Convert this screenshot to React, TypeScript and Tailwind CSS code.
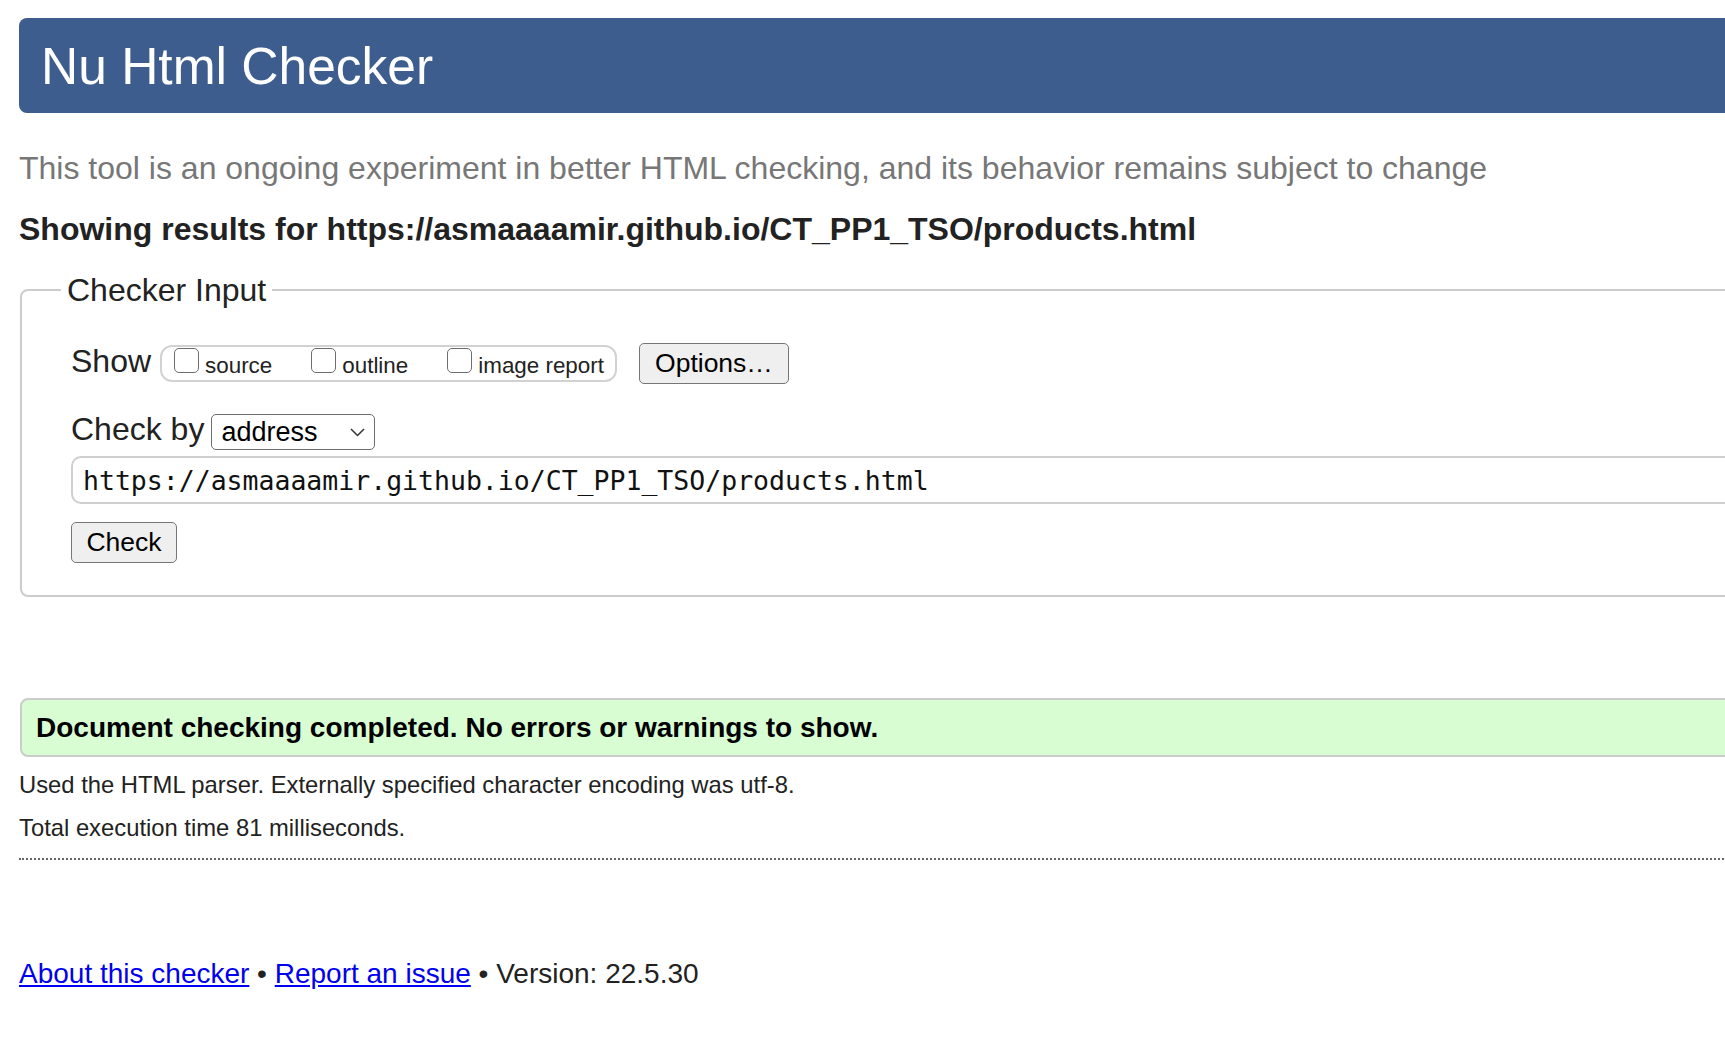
import React from "react";

const CHECKS = ["source", "outline", "image report"];

function Checkbox({ label }: { label: string }) {
  return (
    <label className="flex items-baseline gap-[6px]">
      <span className="block size-[25px] shrink-0 rounded-[5px] border-[1.5px] border-[#6e6e6e] bg-white" />
      <span className="text-[22.4px] leading-[26px]">{label}</span>
    </label>
  );
}

function Chevron() {
  return (
    <svg width="15" height="9" viewBox="0 0 15 9" fill="none" aria-hidden>
      <polyline points="1,1 7.5,7.5 14,1" stroke="#333" strokeWidth="1.5" />
    </svg>
  );
}

export default function App() {
  return (
    <div className="min-h-screen w-full overflow-hidden bg-white font-['Liberation_Sans',Arial,sans-serif] text-[#222]">
      <div className="w-[1800px] pl-[19px] pt-[18px] pb-[60px]">
        <header className="flex h-[95px] items-center rounded-l-[8px] bg-[#3e5d8f] pl-[22px]">
          <h1 className="text-[51.5px] leading-[60px] text-white">Nu Html Checker</h1>
        </header>

        <p className="mt-[37px] text-[32px] leading-[36px] text-[#777]">
          This tool is an ongoing experiment in better HTML checking, and its behavior remains subject to change
        </p>

        <p className="mt-[25px] text-[32px] leading-[36px] font-bold">
          Showing results for https://asmaaaamir.github.io/CT_PP1_TSO/products.html
        </p>

        <fieldset className="mt-[25px] ml-px rounded-[8px] border-2 border-[#cccccc] px-[39px] pt-[35px] pb-[32px]">
          <legend className="px-[6px] text-[32px] leading-[36px]">Checker Input</legend>
          <div className="pl-[10px]">
            <div className="flex items-start">
              <span className="text-[32px] leading-[36px]">Show</span>
              <div className="ml-[9px] mt-[2px] flex h-[37px] items-center gap-[39px] rounded-[12px] border-2 border-[#d2d2d2] pl-[12px] pr-[11px]">
                {CHECKS.map((c) => (
                  <Checkbox key={c} label={c} />
                ))}
              </div>
              <button className="ml-[22px] flex h-[41px] w-[150px] items-center justify-center rounded-[5px] border-[1.5px] border-[#767676] bg-[#efefef] text-[26.5px] text-black">
                Options…
              </button>
            </div>

            <div className="mt-[30px] flex items-start">
              <span className="text-[32px] leading-[30px]">Check by</span>
              <div className="ml-[7px] flex h-[36px] w-[164px] items-center justify-between rounded-[5px] border-[1.5px] border-[#6e6e6e] bg-white pl-[9px] pr-[9px] text-[27px] text-black">
                <span>address</span>
                <Chevron />
              </div>
            </div>

            <div className="mt-[6px] flex h-[48px] items-center rounded-[10px] border-2 border-[#cfcfcf] pl-[10px] pt-[2px] font-['DejaVu_Sans_Mono',monospace] text-[26.5px] text-[#111]">
              https://asmaaaamir.github.io/CT_PP1_TSO/products.html
            </div>

            <button className="mt-[18px] flex h-[41px] w-[106px] items-center justify-center rounded-[5px] border-[1.5px] border-[#767676] bg-[#efefef] text-[26.5px] text-black">
              Check
            </button>
          </div>
        </fieldset>

        <div className="mt-[101px] ml-px flex h-[59px] items-center rounded-l-[8px] border-2 border-[#cccccc] bg-[#d8fdd3] px-[14px]">
          <p className="text-[28px] font-bold text-black">
            Document checking completed. No errors or warnings to show.
          </p>
        </div>

        <p className="mt-[14px] text-[23.8px] leading-[28px]">
          Used the HTML parser. Externally specified character encoding was utf-8.
        </p>
        <p className="mt-[15px] text-[23.8px] leading-[28px]">Total execution time 81 milliseconds.</p>

        <hr className="mt-[16px] border-0 border-t-2 border-dotted border-[#666]" />

        <p className="mt-[98px] text-[28px] leading-[32px]">
          <a href="#" className="text-[#0000ee] underline">About this checker</a>
          {" • "}
          <a href="#" className="text-[#0000ee] underline">Report an issue</a>
          {" • Version: 22.5.30"}
        </p>
      </div>
    </div>
  );
}
